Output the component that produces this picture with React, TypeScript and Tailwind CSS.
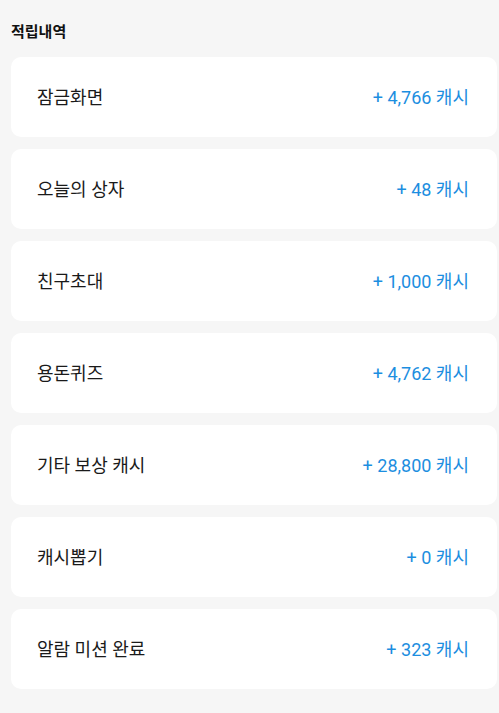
const items = [
  { label: "잠금화면", amount: "4,766" },
  { label: "오늘의 상자", amount: "48" },
  { label: "친구초대", amount: "1,000" },
  { label: "용돈퀴즈", amount: "4,762" },
  { label: "기타 보상 캐시", amount: "28,800" },
  { label: "캐시뽑기", amount: "0" },
  { label: "알람 미션 완료", amount: "323" },
];

export default function App() {
  return (
    <div
      className="min-h-[713px] w-full bg-[#f6f6f6] pl-[11px] pr-[2px] pt-[22px]"
      style={{ fontFamily: 'Roboto, "Noto Sans CJK KR", sans-serif' }}
    >
      <h2 className="text-[15px] font-bold leading-[20px] text-[#111]">적립내역</h2>
      <div className="mt-[15px] flex flex-col gap-[12px]">
        {items.map((item) => (
          <div
            key={item.label}
            className="flex h-[80px] items-center justify-between rounded-[10px] bg-white pl-[26px] pr-[28px]"
          >
            <span className="text-[18px] text-[#1a1a1a]">{item.label}</span>
            <span className="text-[18px] text-[#1c8ee0]">+ {item.amount} 캐시</span>
          </div>
        ))}
      </div>
    </div>
  );
}
